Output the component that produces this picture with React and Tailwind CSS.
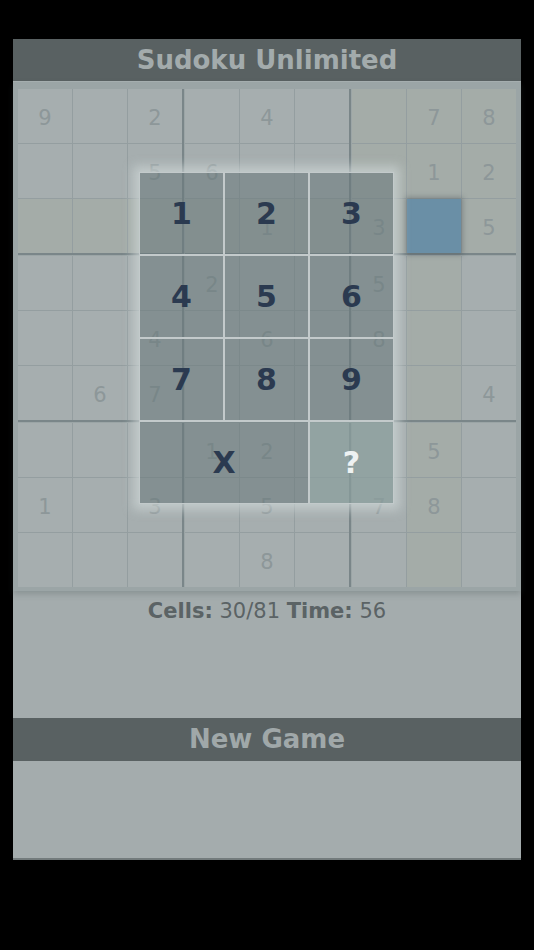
import React from "react";

// 0 = empty, -1 = selected cell
const board = [
  [9, 0, 2, 0, 4, 0, 0, 7, 8],
  [0, 0, 5, 6, 0, 0, 0, 1, 2],
  [0, 0, 0, 0, 1, 0, 3, -1, 5],
  [0, 0, 0, 2, 0, 0, 5, 0, 0],
  [0, 0, 4, 0, 6, 0, 8, 0, 0],
  [0, 6, 7, 0, 0, 0, 0, 0, 4],
  [0, 0, 0, 1, 2, 0, 0, 5, 0],
  [1, 0, 3, 0, 5, 0, 7, 8, 0],
  [0, 0, 0, 0, 8, 0, 0, 0, 0],
];

const selRow = 2;
const selCol = 7;

function Cell({ r, c }) {
  const v = board[r][c];
  if (v === -1) {
    return <div className="w-[54px] h-[54px] bg-[#6a8fa6] shadow-[0_0_5px_2px_rgba(60,70,75,0.35)] relative z-10" />;
  }
  const hl =
    r === selRow ||
    c === selCol ||
    (Math.floor(r / 3) === Math.floor(selRow / 3) && Math.floor(c / 3) === Math.floor(selCol / 3));
  return (
    <div
      className={
        "w-[54px] h-[54px] flex items-center justify-center pt-[5px] text-[21px] text-[#8d9799] " +
        (hl ? "bg-[#a4aca8]" : "bg-[#a6aeaf]")
      }
    >
      {v > 0 ? v : ""}
    </div>
  );
}

function Box({ br, bc }) {
  const cls =
    "grid grid-cols-3 gap-px bg-[#949ea0] " +
    (bc < 2 ? "border-r-2 " : "") +
    (br < 2 ? "border-b-2 " : "") +
    "border-[#7a8689]";
  const cells = [];
  for (let r = 0; r < 3; r++) {
    for (let c = 0; c < 3; c++) {
      cells.push(<Cell key={r * 3 + c} r={br * 3 + r} c={bc * 3 + c} />);
    }
  }
  return <div className={cls}>{cells}</div>;
}

function NumPad() {
  const key =
    "h-[81px] bg-[rgba(104,120,122,0.55)] ring-1 ring-[#c3cacb] flex items-center justify-center text-[30px] font-bold text-[#2b3a50]";
  return (
    <div className="absolute left-[127px] top-[91px] z-20 w-[253px] grid grid-cols-3 gap-[2px] shadow-[0_0_10px_7px_rgba(205,213,214,0.7)]">
      {[1, 2, 3, 4, 5, 6, 7, 8, 9].map((n) => (
        <div key={n} className={key}>
          {n}
        </div>
      ))}
      <div className={key + " col-span-2"}>X</div>
      <div className="h-[81px] bg-[rgba(138,158,157,0.7)] ring-1 ring-[#c3cacb] flex items-center justify-center text-[30px] font-bold text-[#eef2f2]">
        ?
      </div>
    </div>
  );
}

export default function App() {
  return (
    <div
      className="bg-black min-h-[950px] pt-[39px] px-[13px]"
      style={{ fontFamily: '"DejaVu Sans", Verdana, sans-serif' }}
    >
      <div className="w-[508px] h-[821px] bg-[#a4acad] flex flex-col border-b-2 border-[#737b7c]">
        <div className="h-[42px] bg-[#596162] flex items-center justify-center text-[26px] font-bold text-[#a3abac]">
          Sudoku Unlimited
        </div>
        <div className="h-px bg-[#aab2b3]" />
        <div className="relative bg-[#9ba5a6] px-[5px] pt-[7px] pb-[4px] shadow-[0_3px_6px_rgba(60,70,72,0.25)]">
          <div className="grid grid-cols-[166px_166px_164px] gap-px">
            {[0, 1, 2].map((br) =>
              [0, 1, 2].map((bc) => <Box key={br * 3 + bc} br={br} bc={bc} />)
            )}
          </div>
          <NumPad />
        </div>
        <div className="mt-[8px] text-center text-[21px] text-[#5b6365] leading-[24px]">
          <span className="font-bold">Cells:</span> 30/81 <span className="font-bold">Time:</span> 56
        </div>
        <div className="mt-[95px] h-[43px] bg-[#596162] flex items-center justify-center text-[26px] font-bold text-[#a0a8a9]">
          New Game
        </div>
      </div>
    </div>
  );
}
